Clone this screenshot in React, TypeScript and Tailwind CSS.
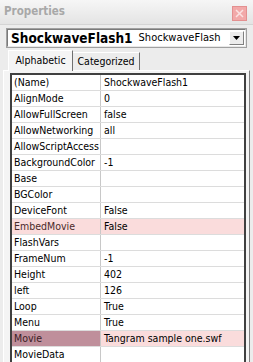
import React from "react";

const rows: [string, string, string?][] = [
  ["(Name)", "ShockwaveFlash1"],
  ["AlignMode", "0"],
  ["AllowFullScreen", "false"],
  ["AllowNetworking", "all"],
  ["AllowScriptAccess", ""],
  ["BackgroundColor", "-1"],
  ["Base", ""],
  ["BGColor", ""],
  ["DeviceFont", "False"],
  ["EmbedMovie", "False", "embed"],
  ["FlashVars", ""],
  ["FrameNum", "-1"],
  ["Height", "402"],
  ["left", "126"],
  ["Loop", "True"],
  ["Menu", "True"],
  ["Movie", "Tangram sample one.swf", "movie"],
  ["MovieData", ""],
];

export default function App() {
  return (
    <div
      className="w-[253px] h-[362px] overflow-hidden bg-[#ececec] flex flex-col text-[10.5px] text-black"
      style={{ fontFamily: '"DejaVu Sans Condensed", "DejaVu Sans", sans-serif', fontStretch: "condensed" }}
    >
      {/* Title bar */}
      <div className="h-[25px] shrink-0 flex items-center justify-between pl-[4px] pr-[6px] bg-gradient-to-b from-[#f6f6f6] to-[#e4e4e4] border-b border-[#d4d4d4]">
        <span className="font-bold text-[11.5px] text-[#a8a8a8]">Properties</span>
        <div className="w-[15px] h-[15px] bg-[#f2a9a9] border border-[#e39090] flex items-center justify-center mt-[3px]">
          <svg width="9" height="9" viewBox="0 0 9 9">
            <path d="M1 1 L8 8 M8 1 L1 8" stroke="#fbe2e2" strokeWidth="1.5" />
          </svg>
        </div>
      </div>
      {/* Dropdown */}
      <div className="mx-[7px] mt-[4px] h-[18px] shrink-0 flex items-center bg-white border border-t-[#7a7a7a] border-l-[#7a7a7a] border-r-[#e8e8e8] border-b-[#e8e8e8] outline outline-1 outline-[#a0a0a0]">
        <span className="pl-[3px] font-bold text-[13.5px]">ShockwaveFlash1</span>
        <span className="pl-[6px] text-[11px]">ShockwaveFlash</span>
        <div className="ml-auto mr-[1px] w-[15px] h-[14px] bg-[#ececec] border border-t-white border-l-white border-r-[#808080] border-b-[#808080] flex items-center justify-center">
          <svg width="7" height="4" viewBox="0 0 7 4">
            <path d="M0 0 H7 L3.5 4 Z" fill="#000" />
          </svg>
        </div>
      </div>
      {/* Tabs */}
      <div className="mt-[2px] flex items-end pl-[8px] h-[21px] shrink-0">
        <div className="relative z-10 h-[21px] w-[65px] flex items-center justify-center bg-[#f4f4f4] border border-b-0 border-t-white border-l-white border-r-[#707070] mb-[-1px]">
          Alphabetic
        </div>
        <div className="h-[18px] w-[67px] flex items-center justify-center bg-[#ececec] border border-b-0 border-t-white border-r-[#707070] border-l-0">
          Categorized
        </div>
      </div>
      {/* Tab page */}
      <div className="mx-[3px] flex-1 border border-t-white border-l-white border-r-[#808080] border-b-0 bg-[#f4f4f4] pt-[2px] pl-[6px] pr-[3px]">
        <div className="h-full border-2 border-t-[#404040] border-l-[#404040] border-r-[#404040] border-b-0 bg-white">
          {rows.map(([name, value, kind]) => (
            <div
              key={name}
              className={`h-[16px] flex border-b border-[#dcdcdc] ${kind ? "bg-[#fadcdc]" : ""}`}
            >
              <div
                className={`w-[89px] shrink-0 pl-[2px] leading-[15px] whitespace-nowrap border-r border-[#c8c8c8] ${
                  kind === "movie" ? "bg-[#bf8f9b] text-[#3a1c24]" : ""
                } ${kind === "embed" ? "text-[#4a2a2a]" : ""}`}
              >
                {name}
              </div>
              <div className="pl-[3px] leading-[15px] whitespace-nowrap">{value}</div>
            </div>
          ))}
        </div>
      </div>
    </div>
  );
}
